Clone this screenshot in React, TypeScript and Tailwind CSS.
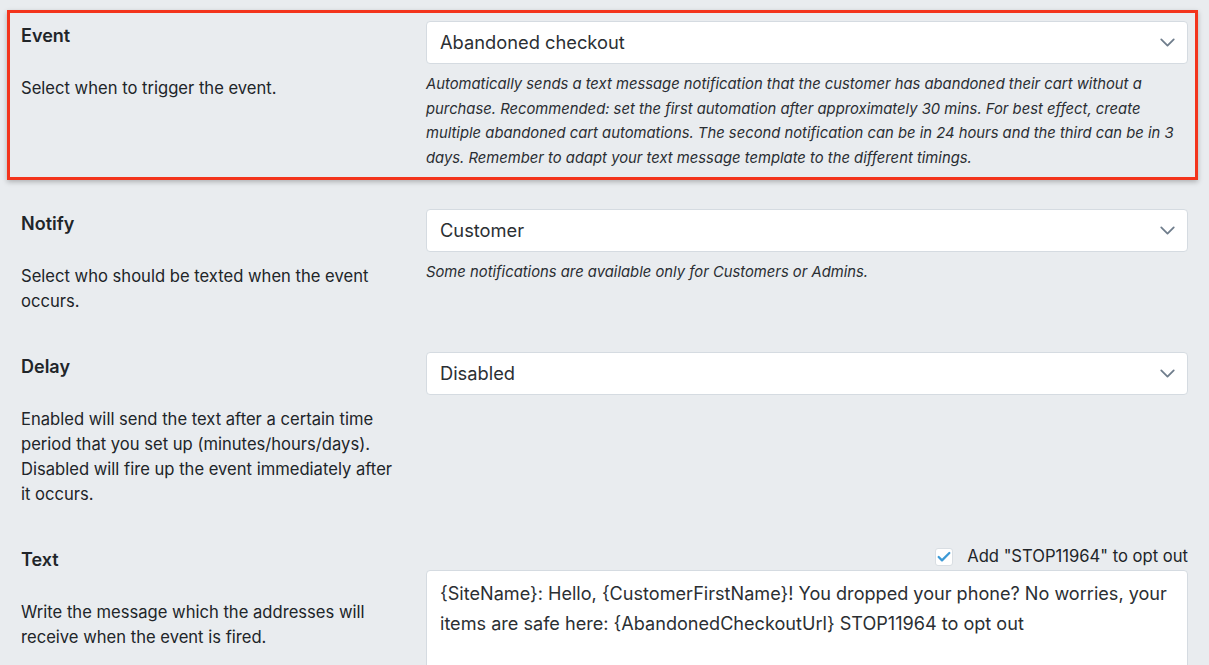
import { ChevronDown, Check } from 'lucide-react';

const font = { fontFamily: 'Inter, "Noto Sans", sans-serif' };

const Select = ({ value }: { value: string }) => (
  <div className="flex h-[43px] items-center justify-between rounded-[4px] border border-[#d5dbe1] bg-white pl-[13px] pr-[7px]">
    <span className="text-[18.3px] text-[#2b2f33]">{value}</span>
    <ChevronDown size={25} strokeWidth={1.7} className="text-[#6f7d8c]" />
  </div>
);

const Label = ({ title, children }: { title: string; children: React.ReactNode }) => (
  <div className="w-[380px] shrink-0 text-[#212529]">
    <h3 className="text-[18px] font-semibold leading-[30px]">{title}</h3>
    <p className="mt-[25px] text-[16.6px] leading-[25px]">{children}</p>
  </div>
);

const Hint = ({ children }: { children: React.ReactNode }) => (
  <p className="mt-[8px] text-[14.8px] italic leading-[24.7px] text-[#2a2e33]">{children}</p>
);

export default function App() {
  return (
    <div className="min-h-screen overflow-hidden bg-[#e9ecef] pt-[10px]" style={font}>
      {/* highlighted row */}
      <div className="ml-[7px] mr-[11px] border-[3px] border-[#f3341c] pb-[6px] pl-[11px] pr-[7px] pt-[8px] shadow-[0_2px_5px_rgba(0,0,0,0.25)]">
        <div className="flex gap-[25px]">
          <Label title="Event">Select when to trigger the event.</Label>
          <div className="flex-1">
            <Select value="Abandoned checkout" />
            <Hint>
              Automatically sends a text message notification that the customer has abandoned their cart without a
              purchase. Recommended: set the first automation after approximately 30 mins. For best effect, create
              multiple abandoned cart automations. The second notification can be in 24 hours and the third can be in 3
              days. Remember to adapt your text message template to the different timings.
            </Hint>
          </div>
        </div>
      </div>

      <div className="px-[21px]">
        <div className="mt-[29px] flex gap-[25px]">
          <Label title="Notify">Select who should be texted when the event occurs.</Label>
          <div className="flex-1">
            <Select value="Customer" />
            <Hint>Some notifications are available only for Customers or Admins.</Hint>
          </div>
        </div>

        <div className="mt-[38px] flex gap-[25px]">
          <Label title="Delay">
            Enabled will send the text after a certain time period that you set up (minutes/hours/days). Disabled will
            fire up the event immediately after it occurs.
          </Label>
          <div className="flex-1">
            <Select value="Disabled" />
          </div>
        </div>

        <div className="mt-[38px] flex gap-[25px]">
          <Label title="Text">Write the message which the addresses will receive when the event is fired.</Label>
          <div className="flex-1">
            <div className="flex h-[24px] items-center justify-end gap-[14px]">
              <span className="flex h-[18px] w-[18px] items-center justify-center rounded-[3px] border border-[#d9dee3] bg-white">
                <Check size={16} strokeWidth={3.4} className="text-[#3d9ad6]" />
              </span>
              <span className="text-[16.6px] text-[#212529]">Add "STOP11964" to opt out</span>
            </div>
            <div className="mt-[1px] h-[140px] rounded-[4px] border border-[#d5dbe1] bg-white px-[13px] pt-[7px] text-[18.1px] leading-[30px] text-[#2b2f33]">
              {'{SiteName}: Hello, {CustomerFirstName}! You dropped your phone? No worries, your items are safe here: {AbandonedCheckoutUrl} STOP11964 to opt out'}
            </div>
          </div>
        </div>
      </div>
    </div>
  );
}
